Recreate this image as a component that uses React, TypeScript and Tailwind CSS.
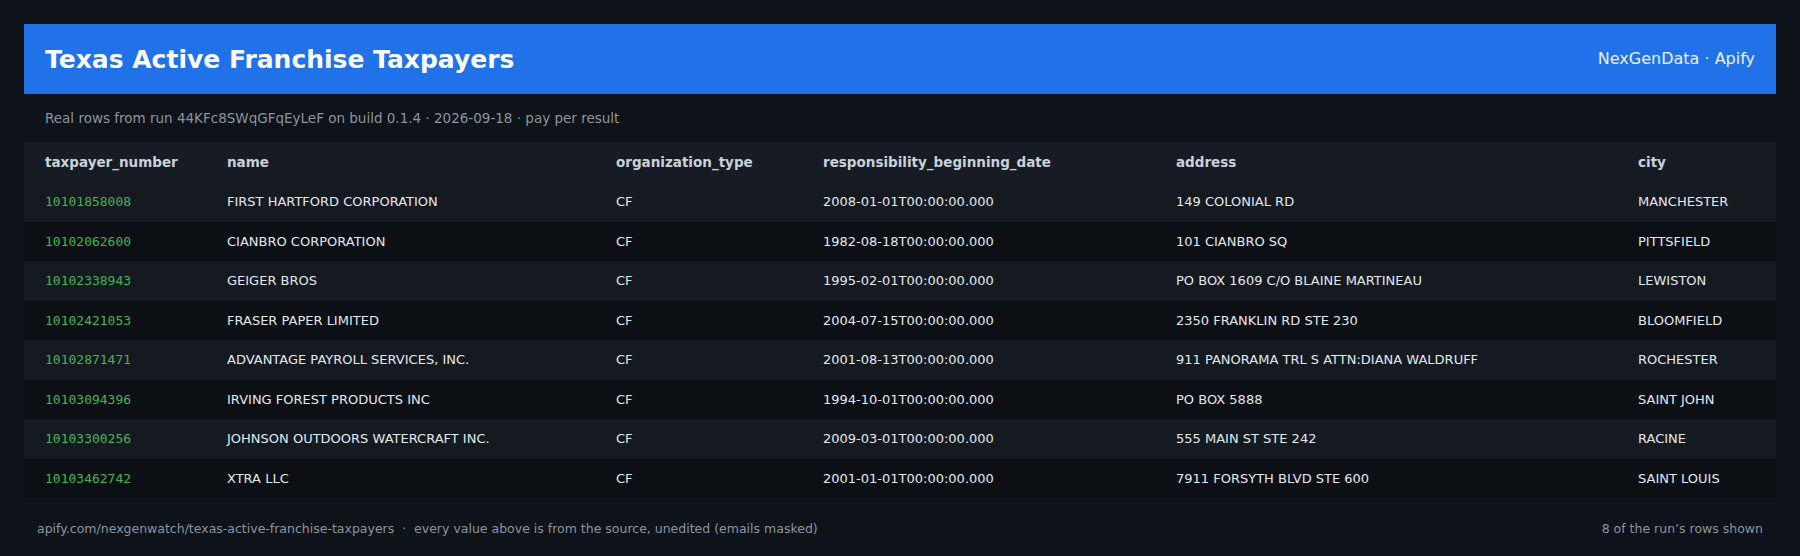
import React from "react";

const rows = [
  ["10101858008", "FIRST HARTFORD CORPORATION", "CF", "2008-01-01T00:00:00.000", "149 COLONIAL RD", "MANCHESTER"],
  ["10102062600", "CIANBRO CORPORATION", "CF", "1982-08-18T00:00:00.000", "101 CIANBRO SQ", "PITTSFIELD"],
  ["10102338943", "GEIGER BROS", "CF", "1995-02-01T00:00:00.000", "PO BOX 1609 C/O BLAINE MARTINEAU", "LEWISTON"],
  ["10102421053", "FRASER PAPER LIMITED", "CF", "2004-07-15T00:00:00.000", "2350 FRANKLIN RD STE 230", "BLOOMFIELD"],
  ["10102871471", "ADVANTAGE PAYROLL SERVICES, INC.", "CF", "2001-08-13T00:00:00.000", "911 PANORAMA TRL S ATTN:DIANA WALDRUFF", "ROCHESTER"],
  ["10103094396", "IRVING FOREST PRODUCTS INC", "CF", "1994-10-01T00:00:00.000", "PO BOX 5888", "SAINT JOHN"],
  ["10103300256", "JOHNSON OUTDOORS WATERCRAFT INC.", "CF", "2009-03-01T00:00:00.000", "555 MAIN ST STE 242", "RACINE"],
  ["10103462742", "XTRA LLC", "CF", "2001-01-01T00:00:00.000", "7911 FORSYTH BLVD STE 600", "SAINT LOUIS"],
];

const headers = ["taxpayer_number", "name", "organization_type", "responsibility_beginning_date", "address", "city"];

const grid = "grid grid-cols-[182px_389px_207px_353px_462px_1fr]";

export default function App() {
  return (
    <div className="min-h-screen bg-[#0e131a] p-6 font-['DejaVu_Sans',sans-serif]">
      <div className="h-[70px] bg-[#2171e9] flex items-center justify-between px-[21px]">
        <div className="text-[25px] font-bold text-white leading-none">Texas Active Franchise Taxpayers</div>
        <div className="text-[16px] text-[#e8f0fc] leading-none">NexGenData · Apify</div>
      </div>
      <div className="px-[21px] pt-[15px] pb-[15px] text-[13.5px] leading-[18px] text-[#8b949e]">
        Real rows from run 44KFc8SWqGFqEyLeF on build 0.1.4 · 2026-09-18 · pay per result
      </div>
      <div>
        <div className={`${grid} h-[40px] items-center bg-[#171c24]`}>
          {headers.map((h) => (
            <div key={h} className="pl-[21px] text-[13.5px] font-bold text-[#c9d1d9] whitespace-nowrap">
              {h}
            </div>
          ))}
        </div>
        {rows.map((r, i) => (
          <div
            key={r[0]}
            className={`${grid} h-[39.5px] items-center ${i % 2 === 0 ? "bg-[#151a21]" : "bg-[#0c1015]"}`}
          >
            <div className="pl-[21px] text-[13px] text-[#41b352] font-['DejaVu_Sans_Mono',monospace] whitespace-nowrap">
              {r[0]}
            </div>
            {r.slice(1).map((c, j) => (
              <div key={j} className="pl-[21px] text-[13px] text-[#e2e7ed] whitespace-nowrap">
                {c}
              </div>
            ))}
          </div>
        ))}
      </div>
      <div className="flex justify-between px-[13px] pt-[23px] text-[12.5px] leading-4 text-[#8b949e]">
        <div>apify.com/nexgenwatch/texas-active-franchise-taxpayers &nbsp;·&nbsp; every value above is from the source, unedited (emails masked)</div>
        <div>8 of the run’s rows shown</div>
      </div>
    </div>
  );
}
